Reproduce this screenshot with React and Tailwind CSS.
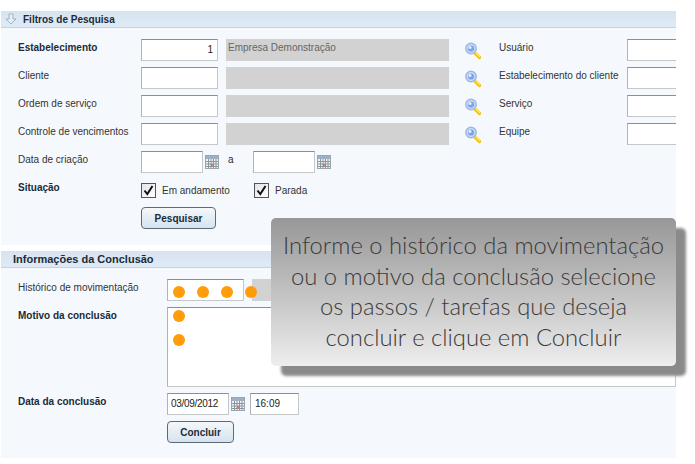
const field = "h-[22px] bg-white border border-[#c4c8c8] border-t-[#8c8f8f] border-l-[#b0b4b4] text-[10px] text-[#222] shrink-0"

function Lupa() {
  return (
    <svg width="18" height="18" viewBox="0 0 18 18" className="shrink-0">
      <path d="M11 11 L15.5 15.5" stroke="#f2c21c" strokeWidth="3.2" strokeLinecap="round" />
      <path d="M11.5 10.5 L15.5 14.5" stroke="#ffe96e" strokeWidth="1.1" strokeLinecap="round" />
      <circle cx="7" cy="6.5" r="5.2" fill="#c9dcf6" stroke="#9db8e4" strokeWidth="1.5" />
      <circle cx="7" cy="6.5" r="3.1" fill="#7ba3e8" />
      <circle cx="6" cy="5.5" r="1.5" fill="#e4eefc" />
    </svg>
  )
}

function Calendario() {
  return (
    <svg width="14" height="14" viewBox="0 0 14 14" className="shrink-0">
      <rect x="0.5" y="0.5" width="13" height="13" fill="#f2f4f6" stroke="#9aa5b0" />
      <rect x="1" y="1" width="12" height="3" fill="#9db0c4" />
      <path d="M1 6.5H13M1 9H13M1 11.5H13M3.5 4V13M6 4V13M8.5 4V13M11 4V13" stroke="#8a949e" strokeWidth="1" />
      <rect x="6" y="9" width="2.5" height="2.5" fill="#cf7a76" />
    </svg>
  )
}

function Check({ label, className }) {
  return (
    <div className={`flex items-center ${className}`}>
      <div className="w-[15px] h-[15px] bg-gradient-to-br from-[#e4e4e4] to-white border border-[#555] flex items-center justify-center shrink-0">
        <svg width="11" height="11" viewBox="0 0 11 11">
          <path d="M1.5 5.5 L4.3 9 L9.5 1" fill="none" stroke="#111" strokeWidth="2" />
        </svg>
      </div>
      <span className="ml-[6px] text-[#333]">{label}</span>
    </div>
  )
}

function Botao({ children, className }) {
  return (
    <button className={`h-[22px] rounded-[4px] border border-[#5d6b78] bg-gradient-to-b from-[#f4f8fb] to-[#d5e3ef] font-bold text-[10px] text-[#1c2b38] ${className}`}>
      {children}
    </button>
  )
}

function Cabecalho({ children, seta }) {
  return (
    <div className="h-[17px] flex items-center bg-gradient-to-b from-[#d6e4f1] to-[#dfeaf5] border-b border-[#c6d3df] font-bold text-[#1c2b38]">
      {seta && (
        <svg width="12" height="12" viewBox="0 0 12 12" className="ml-[4px] mr-[6px] shrink-0">
          <path d="M4 1H8V6H11L6 11L1 6H4Z" fill="#e6eef6" stroke="#9fb3c8" />
        </svg>
      )}
      <span className={seta ? "text-[10px]" : "ml-[12px] text-[11px]"}>{children}</span>
    </div>
  )
}

const linhas = [
  { label: "Estabelecimento", bold: true, valor: "1", nome: "Empresa Demonstração", direita: "Usuário" },
  { label: "Cliente", direita: "Estabelecimento do cliente" },
  { label: "Ordem de serviço", direita: "Serviço" },
  { label: "Controle de vencimentos", direita: "Equipe" },
]

function Ponto({ className }) {
  return <div className={`absolute w-[12px] h-[12px] rounded-full bg-[#ff9c0a] ${className}`} />
}

export default function App() {
  return (
    <div className="relative w-[695px] h-[464px] bg-white overflow-hidden font-['Liberation_Sans',sans-serif] text-[10px] text-[#333]">
      <div className="w-[675px] ml-[1px] mt-[11px] overflow-hidden">
        <Cabecalho seta>Filtros de Pesquisa</Cabecalho>
        <div className="h-[217px] bg-[#f5f9fd] pl-[17px] pt-[11px]">
          {linhas.map((l) => (
            <div key={l.label} className="flex h-[22px] mb-[6px]">
              <div className={`w-[123px] h-[18px] leading-[18px] shrink-0 ${l.bold ? "font-bold text-[#1c2b38]" : ""}`}>{l.label}</div>
              <div className={`${field} w-[77px] text-right pr-[4px] pt-[2px] leading-[16px]`}>{l.valor}</div>
              <div className="w-[223px] h-[22px] ml-[8px] bg-[#d2d2d2] px-[2px] leading-[18px] text-[#666] shrink-0">{l.nome}</div>
              <div className="ml-[15px] mt-[3px] w-[20px] shrink-0"><Lupa /></div>
              <div className="w-[128px] ml-[15px] h-[18px] leading-[18px] shrink-0">{l.direita}</div>
              <div className={`${field} w-[60px]`} />
            </div>
          ))}
          <div className="flex h-[22px] mb-[6px]">
            <div className="w-[123px] h-[18px] leading-[18px] shrink-0">Data de criação</div>
            <div className={`${field} w-[62px]`} />
            <div className="ml-[2px] mt-[4px]"><Calendario /></div>
            <div className="w-[34px] pl-[9px] leading-[18px] text-[#1c2b38]">a</div>
            <div className={`${field} w-[62px]`} />
            <div className="ml-[2px] mt-[4px]"><Calendario /></div>
          </div>
          <div className="flex h-[22px] mb-[6px]">
            <div className="w-[123px] h-[18px] leading-[18px] font-bold text-[#1c2b38] shrink-0">Situação</div>
            <Check label="Em andamento" className="w-[113px] h-[21px] mt-[1px]" />
            <Check label="Parada" className="h-[21px] mt-[1px]" />
          </div>
          <Botao className="ml-[123px] w-[75px]">Pesquisar</Botao>
        </div>

        <div className="mt-[6px]">
          <Cabecalho>Informações da Conclusão</Cabecalho>
        </div>
        <div className="relative h-[190px] bg-[#f5f9fd] pl-[17px] pt-[11px]">
          <div className="flex h-[22px] mb-[6px]">
            <div className="w-[149px] h-[18px] leading-[18px] shrink-0">Histórico de movimentação</div>
            <div className={`${field} w-[77px]`} />
            <div className="w-[300px] h-[22px] ml-[8px] bg-[#d2d2d2] shrink-0" />
          </div>
          <div className="flex h-[80px] mb-[6px]">
            <div className="w-[149px] h-[18px] leading-[18px] font-bold text-[#1c2b38] shrink-0">Motivo da conclusão</div>
            <div className={`${field} w-[509px] !h-[80px]`} />
          </div>
          <div className="flex h-[22px] mb-[6px]">
            <div className="w-[149px] h-[18px] leading-[18px] font-bold text-[#1c2b38] shrink-0">Data da conclusão</div>
            <div className={`${field} w-[62px] pl-[3px] pt-[2px] leading-[16px] tracking-[-0.3px]`}>03/09/2012</div>
            <div className="ml-[2px] mt-[4px]"><Calendario /></div>
            <div className={`${field} w-[49px] ml-[5px] pl-[4px] pt-[2px] leading-[16px]`}>16:09</div>
          </div>
          <Botao className="ml-[149px] w-[67px]">Concluir</Botao>
          <Ponto className="left-[172px] top-[18px]" />
          <Ponto className="left-[196px] top-[18px]" />
          <Ponto className="left-[220px] top-[18px]" />
          <Ponto className="left-[244px] top-[18px]" />
          <Ponto className="left-[172px] top-[42px]" />
          <Ponto className="left-[172px] top-[66px]" />
        </div>
      </div>

      <div className="absolute left-[271px] top-[218px] w-[405px] h-[148px] rounded-[5px] bg-gradient-to-b from-[#979797] to-[#eeeeee] shadow-[10px_10px_3px_#8a8a8a] flex flex-col justify-center pb-[2px] text-center font-['Lato',sans-serif] font-light text-[23.8px] leading-[30.5px] text-[#3a3a3a]">
        <div>Informe o histórico da movimentação</div>
        <div>ou o motivo da conclusão selecione</div>
        <div>os passos / tarefas que deseja</div>
        <div>concluir e clique em Concluir</div>
      </div>
    </div>
  )
}
